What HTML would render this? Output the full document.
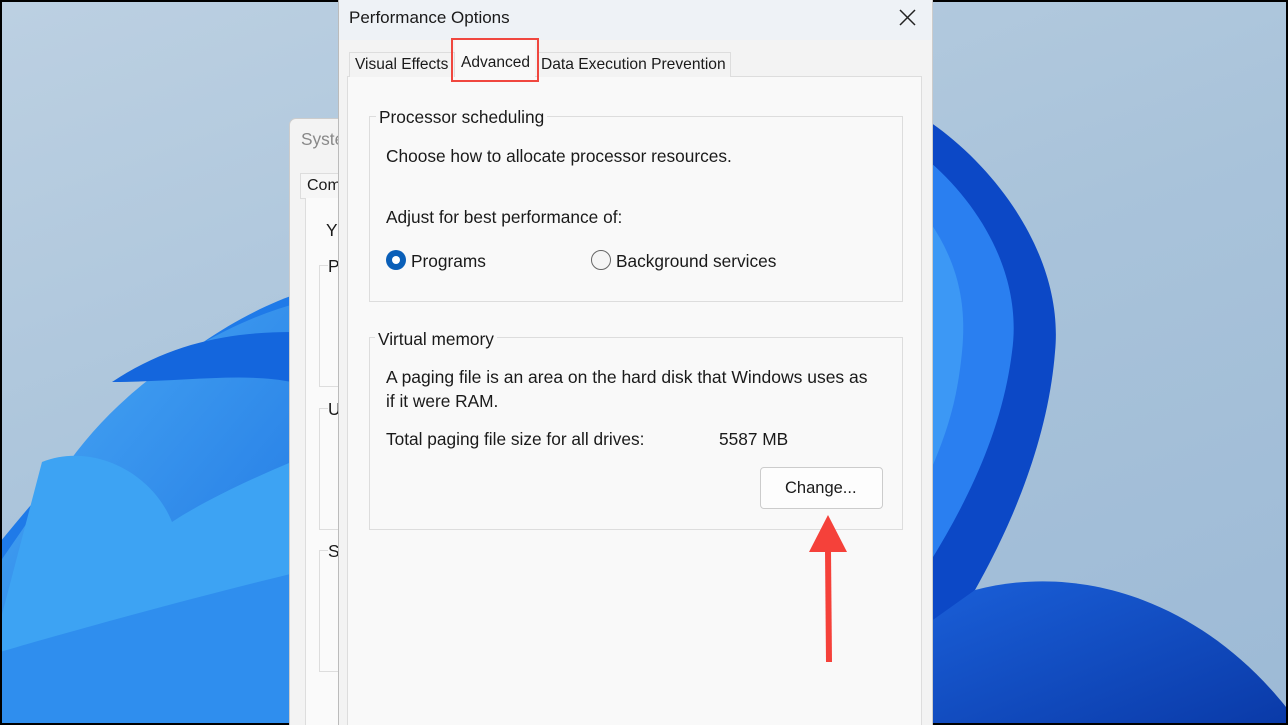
<!DOCTYPE html>
<html><head><style>
html,body{margin:0;width:1288px;height:725px;overflow:hidden}
body{position:relative;font-family:"Liberation Sans",sans-serif;background:#000}
.bg{position:absolute;left:2px;top:2px;width:1284px;height:721px;background:linear-gradient(160deg,#bcd0e2 0%,#a9c3da 50%,#9dbad6 100%);overflow:hidden}
.a{position:absolute;color:#1a1a1a;font-size:17.3px;white-space:nowrap}
</style></head><body>
<div class="bg">
<svg width="1284" height="721" style="position:absolute;left:0;top:0">
<defs>
<linearGradient id="l1" x1="0" y1="0" x2="1" y2="1"><stop offset="0" stop-color="#4aaaf5"/><stop offset="1" stop-color="#1a6fe0"/></linearGradient>
<linearGradient id="r1" x1="0" y1="0" x2="1" y2="1"><stop offset="0" stop-color="#1a5fd8"/><stop offset="1" stop-color="#0a3aa8"/></linearGradient>
</defs>
<path d="M-2 540 C80 440 180 330 300 290 L340 280 L340 721 L-2 721Z" fill="#1f7ae8"/>
<path d="M60 470 C120 380 220 320 300 300 L340 300 L340 721 L-2 721 L-2 560Z" fill="url(#l1)"/>
<path d="M40 460 C90 440 150 470 170 520 C200 500 260 470 340 440 L340 721 L-2 721 L-2 620Z" fill="#3da3f3"/>
<path d="M110 380 C170 340 230 330 290 330 L290 380 C240 370 180 380 110 380Z" fill="#1466dd"/>
<path d="M-2 650 C100 620 250 580 340 560 L340 721 L-2 721Z" fill="#2f8eee"/>
<path d="M928 120 C1000 170 1062 260 1053 350 C1045 450 1000 540 973 588 L928 640Z" fill="#0c48c6"/>
<path d="M928 160 C985 210 1020 280 1010 350 C1000 430 965 500 928 560Z" fill="#2a7ff0"/>
<path d="M928 220 C955 260 965 300 960 350 C955 400 945 430 928 470Z" fill="#3c98f5"/>
<path d="M973 588 C1080 560 1200 600 1284 705 L1284 721 L928 721 L928 620Z" fill="url(#r1)"/>
</svg>
</div>
<!-- System dialog behind -->
<div style="position:absolute;left:289px;top:118px;width:60px;height:607px;background:#f3f3f3;border-left:1px solid #ccc;border-top:1px solid #ccc;border-radius:7px 0 0 0"></div>
<div class="a" style="left:301px;top:129px;color:#888">Syste</div>
<div style="position:absolute;left:300px;top:173px;width:50px;height:24px;border:1px solid #ddd;background:#f6f6f6"></div>
<div class="a" style="left:307px;top:177px;font-size:16px">Com</div>
<div style="position:absolute;left:305px;top:198px;width:40px;height:527px;background:#fafafa;border-left:1px solid #ddd"></div>
<div class="a" style="left:326px;top:220px">Y</div>
<div style="position:absolute;left:319px;top:265px;width:30px;height:120px;border:1px solid #ddd"></div>
<div class="a" style="left:328px;top:256px;background:#fafafa">P</div>
<div style="position:absolute;left:319px;top:408px;width:30px;height:120px;border:1px solid #ddd"></div>
<div class="a" style="left:328px;top:399px;background:#fafafa">U</div>
<div style="position:absolute;left:319px;top:550px;width:30px;height:120px;border:1px solid #ddd"></div>
<div class="a" style="left:328px;top:541px;background:#fafafa">S</div>
<!-- main dialog -->
<div style="position:absolute;left:338px;top:0;width:593px;height:725px;background:#f3f3f3;border-left:1px solid #bbb;border-right:1px solid #ccc"></div>
<div style="position:absolute;left:339px;top:0;width:592px;height:40px;background:#eef2f6"></div>
<div class="a" style="left:349px;top:8px;font-size:17px">Performance Options</div>
<svg style="position:absolute;left:899px;top:9px" width="17" height="17"><path d="M1 1L16 16M16 1L1 16" stroke="#222" stroke-width="1.5"/></svg>
<div style="position:absolute;left:347px;top:76px;width:573px;height:649px;background:#f9f9f9;border-left:1px solid #ddd;border-right:1px solid #ddd;border-top:1px solid #ddd"></div>
<div style="position:absolute;left:349px;top:52px;width:104px;height:24px;border:1px solid #ddd;border-bottom:none;background:#f3f3f3"></div>
<div class="a" style="left:355px;top:56px;font-size:15.5px">Visual Effects</div>
<div style="position:absolute;left:537px;top:52px;width:192px;height:24px;border:1px solid #ddd;border-bottom:none;background:#f3f3f3"></div>
<div class="a" style="left:541px;top:56px;font-size:15.6px">Data Execution Prevention</div>
<div style="position:absolute;left:455px;top:40px;width:80px;height:39px;background:#f9f9f9"></div>
<div style="position:absolute;left:451px;top:38px;border:2px solid #f0473f;box-sizing:border-box;width:88px;height:44px"></div>
<div class="a" style="left:461px;top:54px;font-size:15.5px">Advanced</div>
<!-- processor -->
<div style="position:absolute;left:369px;top:116px;width:532px;height:184px;border:1px solid #ddd"></div>
<div class="a" style="left:376px;top:107px;background:#f9f9f9;padding:0 3px">Processor scheduling</div>
<div class="a" style="left:386px;top:146px">Choose how to allocate processor resources.</div>
<div class="a" style="left:386px;top:207px">Adjust for best performance of:</div>
<div style="position:absolute;left:386px;top:250px;width:20px;height:20px;border-radius:50%;background:#0a5fb8"></div>
<div style="position:absolute;left:392px;top:256px;width:8px;height:8px;border-radius:50%;background:#fff"></div>
<div class="a" style="left:411px;top:251px">Programs</div>
<div style="position:absolute;left:591px;top:250px;width:18px;height:18px;border-radius:50%;border:1px solid #666;background:#f5f5f5"></div>
<div class="a" style="left:616px;top:251px">Background services</div>
<!-- virtual -->
<div style="position:absolute;left:369px;top:337px;width:532px;height:191px;border:1px solid #ddd"></div>
<div class="a" style="left:375px;top:329px;background:#f9f9f9;padding:0 3px">Virtual memory</div>
<div class="a" style="left:386px;top:367px;font-size:17.5px">A paging file is an area on the hard disk that Windows uses as</div>
<div class="a" style="left:386px;top:391px">if it were RAM.</div>
<div class="a" style="left:386px;top:429px">Total paging file size for all drives:</div>
<div class="a" style="left:719px;top:429px">5587 MB</div>
<div style="position:absolute;left:760px;top:467px;width:121px;height:40px;border:1px solid #ccc;border-radius:4px;background:#fdfdfd"></div>
<div class="a" style="left:785px;top:479px;font-size:16.5px">Change...</div>
<!-- arrow -->
<svg style="position:absolute;left:800px;top:510px" width="60" height="160"><path d="M28 5L47 42H9Z" fill="#f5413a"/><path d="M28 40L29 152" stroke="#f5413a" stroke-width="6"/></svg>
</body></html>
